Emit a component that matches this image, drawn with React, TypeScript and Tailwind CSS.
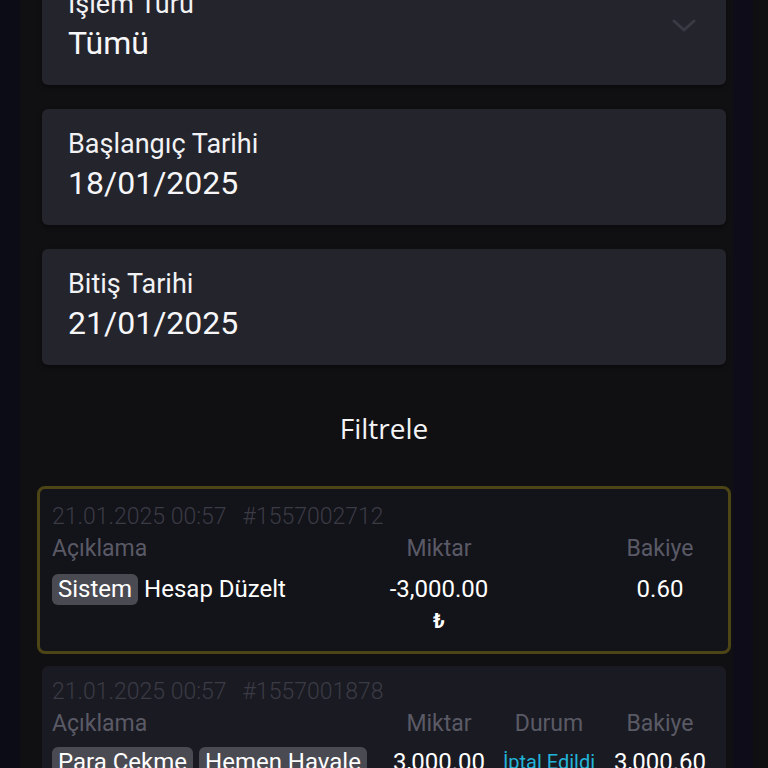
import React from "react";

function Field({ label, value, chevron }: { label: string; value: string; chevron?: boolean }) {
  return (
    <div className="relative h-[116px] w-[684px] shrink-0 rounded-[6px] bg-[#23242c] pl-[26px] pt-[19px] shadow-[0_2px_4px_rgba(0,0,0,0.4)]">
      <div className="text-[27px] leading-[32px] text-[#f2f2f4]">{label}</div>
      <div className="mt-[4px] text-[32px] leading-[38px] text-[#f7f7f9]">{value}</div>
      {chevron && (
        <svg className="absolute right-[30px] top-[50px]" width="24" height="14" viewBox="0 0 24 14" fill="none">
          <path d="M2 2 L12 11 L22 2" stroke="#3a3a44" strokeWidth="3" strokeLinecap="round" strokeLinejoin="round" />
        </svg>
      )}
    </div>
  );
}

function Badge({ children }: { children: React.ReactNode }) {
  return (
    <span className="inline-flex h-[31px] items-center rounded-[6px] bg-[#4a4a52] px-[6px] text-[24px] leading-[31px] text-white">{children}</span>
  );
}

export default function App() {
  return (
    <div className="flex h-[768px] w-[768px] overflow-hidden bg-[#0f0f11]" style={{ fontFamily: "Roboto, 'Noto Sans', sans-serif" }}>
      <div className="w-[20px] shrink-0 bg-[#0c0c16]" />
      <div className="flex w-[713px] shrink-0 flex-col bg-[#101013]">
        <div className="mt-[-31px] flex shrink-0 flex-col gap-[24px] pl-[22px]">
          <Field label="İşlem Türü" value="Tümü" chevron />
          <Field label="Başlangıç Tarihi" value="18/01/2025" />
          <Field label="Bitiş Tarihi" value="21/01/2025" />
        </div>
        <div className="flex h-[121px] shrink-0 items-center justify-center pl-[22px] pr-[7px] text-[28px] text-[#f4f4f6]" style={{ fontFamily: "'Open Sans', Roboto, sans-serif" }}>
          <span className="pt-[4px]">Filtrele</span>
        </div>
        <div className="ml-[17px] w-[694px] shrink-0 rounded-[8px] border-[3px] border-[#4e4517] bg-[#13131a] px-[12px] pb-[14px] pt-[14px]">
          <div className="text-[23px] font-light leading-[28px] text-[#3b3b45]">
            21.01.2025 00:57<span className="ml-[16px]">#1557002712</span>
          </div>
          <div className="grid grid-cols-[1fr_110px_110px_112px] text-[23px] leading-[36px] text-[#5a5a66]">
            <div>Açıklama</div>
            <div className="text-center">Miktar</div>
            <div />
            <div className="text-center">Bakiye</div>
          </div>
          <div className="mt-[6px] grid grid-cols-[1fr_110px_110px_112px] items-start text-[24px] leading-[32px] text-white">
            <div className="flex h-[32px] items-center gap-[6px]">
              <Badge>Sistem</Badge>
              <span>Hesap Düzelt</span>
            </div>
            <div className="flex flex-col items-center">
              <span className="whitespace-nowrap">-3,000.00</span>
              <span className="text-[20px] font-bold leading-[32px]">₺</span>
            </div>
            <div />
            <div className="text-center">0.60</div>
          </div>
        </div>
        <div className="ml-[22px] mt-[12px] w-[684px] shrink-0 rounded-[6px] bg-[#1a1a22] px-[10px] pt-[12px] pb-[14px]">
          <div className="text-[23px] font-light leading-[28px] text-[#3b3b45]">
            21.01.2025 00:57<span className="ml-[16px]">#1557001878</span>
          </div>
          <div className="grid grid-cols-[1fr_110px_110px_112px] text-[23px] leading-[36px] text-[#5a5a66]">
            <div>Açıklama</div>
            <div className="text-center">Miktar</div>
            <div className="text-center">Durum</div>
            <div className="text-center">Bakiye</div>
          </div>
          <div className="mt-[4px] grid grid-cols-[1fr_110px_110px_112px] items-center text-[24px] leading-[32px] text-white">
            <div className="flex items-center gap-[6px]">
              <Badge>Para Çekme</Badge>
              <Badge>Hemen Havale</Badge>
            </div>
            <div className="text-center whitespace-nowrap">3,000.00</div>
            <div className="text-center text-[20px] whitespace-nowrap text-[#22b4d8]">İptal Edildi</div>
            <div className="text-center whitespace-nowrap">3,000.60</div>
          </div>
        </div>
      </div>
      <div className="w-[20px] shrink-0 bg-[#0d0c18]" />
      <div className="flex-1 bg-[#0f0f11]" />
    </div>
  );
}
